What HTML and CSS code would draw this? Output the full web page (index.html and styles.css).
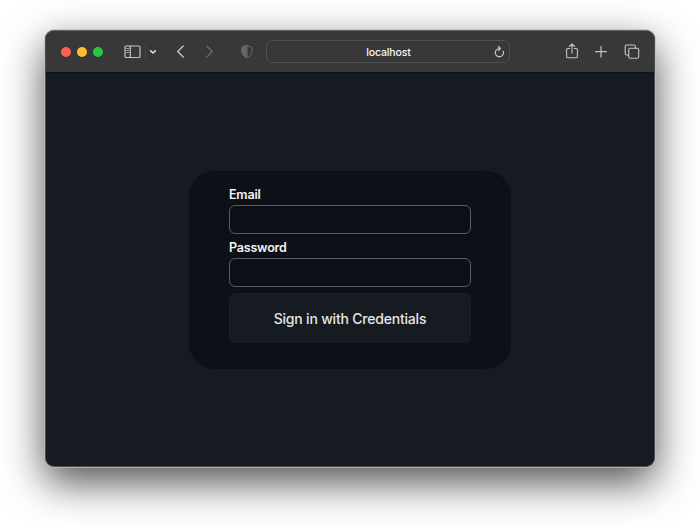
FILE: index.html
```
<!DOCTYPE html>
<html lang="en">
<head>
<meta charset="utf-8">
<title>localhost</title>
<link rel="stylesheet" href="styles.css">
</head>
<body>
<div class="window">
  <header class="toolbar">
    <div class="lights"><span class="light red"></span><span class="light yellow"></span><span class="light green"></span></div>
    <svg class="icon sidebar" width="17" height="14" viewBox="0 0 17 14"><rect x="1" y="1" width="15" height="11.5" rx="1.3"/><path d="M6.3 1v11.500"/><path class="thin" d="M2.700 3.500h2M2.700 5.500h2M2.700 7.500h2"/></svg>
    <span class="divider"></span>
    <svg class="icon menu" width="8" height="6" viewBox="0 0 8 6"><path d="M1.600 1.700 4 3.900l2.400-2.200"/></svg>
    <svg class="icon back" width="9" height="14" viewBox="0 0 9 14"><path d="M7.200 1 1.700 6.500l5.500 5.500"/></svg>
    <svg class="icon forward" width="9" height="14" viewBox="0 0 9 14"><path d="M1.800 1 7.300 6.500l-5.500 5.500"/></svg>
    <svg class="icon shield" width="12" height="14" viewBox="0 0 12 14"><path d="M6 .7 11 2.300v4.800c0 2.500-2 4.300-5 5.800-3-1.500-5-3.300-5-5.800V2.300z"/><path class="half" d="M6 .7v12.200C3 11.400 1 9.600 1 7.100V2.300z"/></svg>
    <div class="address">
      <span class="host">localhost</span>
      <svg class="icon reload" width="11" height="12" viewBox="0 0 11 12"><path d="M9.200 5.100A4.100 4.100 0 1 1 5.500 2.500h.7M4.400.5l2.100 2-2.100 2.100"/></svg>
    </div>
    <svg class="icon share" width="14" height="17" viewBox="0 0 14 17"><path d="M4.700 5.500H2.600a1 1 0 0 0-1 1v7.300a1 1 0 0 0 1 1h8.800a1 1 0 0 0 1-1V6.500a1 1 0 0 0-1-1H9.300M7 10V1M4.300 3.500 7 .8l2.700 2.700"/></svg>
    <svg class="icon plus" width="12" height="12" viewBox="0 0 12 12"><path d="M6 .5v10.500M.6 5.700h10.800"/></svg>
    <svg class="icon tabs" width="16" height="16" viewBox="0 0 16 16"><rect x="4.700" y="4.300" width="10" height="10" rx="1.500"/><path d="M4.500 11H2.700a1.500 1.500 0 0 1-1.500-1.500V2.500A1.500 1.500 0 0 1 2.700 1h7.100a1.500 1.500 0 0 1 1.500 1.500v1.600"/></svg>
  </header>
  <main class="page">
    <form class="card">
      <label for="email">Email</label>
      <input id="email" type="email">
      <label for="password">Password</label>
      <input id="password" type="password">
      <button type="button"><span>Sign in with Credentials</span></button>
    </form>
  </main>
</div>
</body>
</html>
```

FILE: styles.css
```
* {
  box-sizing: border-box;
}

body {
  margin: 0;
  height: 527px;
  padding: 30px 45px 0;
  overflow: hidden;
  background: #fff;
  font-family: Inter, "Liberation Sans", sans-serif;
}

.window {
  display: flex;
  flex-direction: column;
  height: 437px;
  overflow: hidden;
  border: 1px solid #4a4e52;
  border-top-color: #6a6a6a;
  border-radius: 9px;
  background: #161b22;
  box-shadow: 0 0 0 1px rgba(190, 190, 190, 0.75), 0 15px 42px rgba(0, 0, 0, 0.7);
}

.toolbar {
  display: flex;
  align-items: center;
  flex: none;
  height: 42px;
  padding-left: 15px;
  background: #383838;
  border-bottom: 1px solid #111312;
}

.lights {
  display: flex;
  gap: 6px;
  margin-right: 20.5px;
}

.light {
  width: 10px;
  height: 10px;
  border-radius: 50%;
}

.red {
  background: #ff5f57;
}

.yellow {
  background: #febc2e;
}

.green {
  background: #28c840;
}

.icon {
  flex: none;
  fill: none;
  stroke: #c4c4c4;
  stroke-width: 1.2;
  stroke-linecap: round;
  stroke-linejoin: round;
}

.thin {
  stroke-width: 0.8;
}

.divider {
  width: 1px;
  height: 14px;
  margin: 0 3px 0 4.5px;
  background: #474747;
}

.menu {
  stroke: #eee;
  stroke-width: 1.4;
}

.back {
  margin-left: 19px;
  stroke-width: 1.4;
}

.forward {
  margin-left: 20px;
  stroke: #6a6a6a;
}

.shield {
  margin-left: 27px;
  stroke: #666;
  stroke-width: 1;
}

.half {
  fill: #666;
}

.address {
  display: flex;
  align-items: center;
  width: 244px;
  height: 23px;
  margin-left: 13px;
  padding: 0 4px 0 16px;
  border: 1px solid #505050;
  border-radius: 6px;
}

.host {
  flex: 1;
  color: #f5f5f5;
  font-size: 10.5px;
  font-weight: 500;
  line-height: 13px;
  padding-top: 1px;
  letter-spacing: -0.15px;
  text-align: center;
}

.share {
  margin-left: 55px;
  stroke-width: 1.1;
}

.plus {
  margin-left: 16px;
}

.tabs {
  margin-left: 17px;
  stroke-width: 1.1;
}

.page {
  display: flex;
  flex: 1;
  align-items: flex-start;
  justify-content: center;
  padding-top: 98px;
}

.card {
  display: flex;
  flex-direction: column;
  width: 322px;
  height: 198px;
  padding: 14px 40px 0;
  border-radius: 25px;
  background: #0d1016;
}

label {
  height: 20px;
  color: #f4f4f4;
  font-size: 12.5px;
  font-weight: 600;
  line-height: 20px;
  letter-spacing: -0.2px;
}

input {
  width: 242px;
  height: 29px;
  margin: 0 0 4px;
  border: 1px solid #5b5d5f;
  border-radius: 6px;
  background: #0d1016;
}

button {
  width: 242px;
  height: 50px;
  margin: 2px 0 0;
  padding: 2px 0 0;
  border: 1px solid #1b1f23;
  border-radius: 6px;
  background: #161b21;
  color: #e6e6e6;
  font: 500 14px/46px Inter, "Liberation Sans", sans-serif;
  letter-spacing: -0.2px;
}
```
